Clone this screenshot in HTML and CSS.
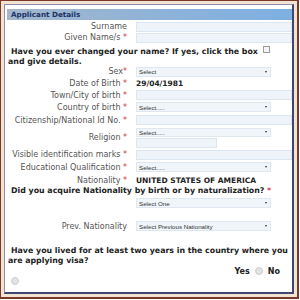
FILE: index.html
```html
<!DOCTYPE html>
<html>
<head>
<meta charset="utf-8">
<link rel="stylesheet" href="styles.css">
</head>
<body>
<div class="frame">
  <div class="panel">
    <div class="header">Applicant Details</div>

    <div class="row h11 mt1"><div class="lbl">Surname</div><div class="field"><div class="input wide"></div></div></div>
    <div class="row h11"><div class="lbl">Given Name/s <span class="req">*</span></div><div class="field"><div class="input wide"></div></div></div>

    <div class="question q1"><span>Have you ever changed your name? If yes, click the box</span><span class="check"></span><br>and give details.</div>

    <div class="row h11"><div class="lbl">Sex<span class="req">*</span></div><div class="field"><div class="select"><span>Select</span><span class="arrow"></span></div></div></div>
    <div class="row h12"><div class="lbl">Date of Birth <span class="req">*</span></div><div class="field"><span class="value">29/04/1981</span></div></div>
    <div class="row h12"><div class="lbl">Town/City of birth <span class="req">*</span></div><div class="field"><div class="input wide"></div></div></div>
    <div class="row h12"><div class="lbl">Country of birth <span class="req">*</span></div><div class="field"><div class="select"><span>Select.....</span><span class="arrow"></span></div></div></div>
    <div class="row h12 mt1"><div class="lbl">Citizenship/National Id No. <span class="req">*</span></div><div class="field"><div class="input wide"></div></div></div>
    <div class="row h21 mt1"><div class="lbl">Religion <span class="req">*</span></div><div class="field stack"><div class="select short"><span>Select.....</span><span class="arrow"></span></div><div class="input small"></div></div></div>
    <div class="row h11 mt1"><div class="lbl">Visible identification marks <span class="req">*</span></div><div class="field"><div class="input wide"></div></div></div>
    <div class="row h12 mt1"><div class="lbl">Educational Qualification <span class="req">*</span></div><div class="field"><div class="select"><span>Select.....</span><span class="arrow"></span></div></div></div>
    <div class="row h12 mt1"><div class="lbl">Nationality <span class="req">*</span></div><div class="field"><span class="value">UNITED STATES OF AMERICA</span></div></div>

    <div class="question q2">Did you acquire Nationality by birth or by naturalization? <span class="req">*</span></div>
    <div class="row h12 mt1"><div class="lbl"></div><div class="field"><div class="select"><span>Select One</span><span class="arrow"></span></div></div></div>

    <div class="row h12 mt11"><div class="lbl">Prev. Nationality</div><div class="field"><div class="select"><span>Select Previous Nationality</span><span class="arrow"></span></div></div></div>

    <div class="question q3">Have you lived for at least two years in the country where you<br>are applying visa?</div>
    <div class="yesno"><span>Yes</span><span class="radio"></span><span>No</span></div>
    <div class="radiorow"><span class="radio big"></span></div>
  </div>
</div>
</body>
</html>
```

FILE: styles.css
```css
html, body {
  margin: 0;
  padding: 0;
  background: #ffffff;
}
body {
  width: 300px;
  height: 300px;
  overflow: hidden;
  font-family: "DejaVu Sans", Verdana, sans-serif;
}
.frame {
  width: 299px;
  height: 299px;
  box-sizing: border-box;
  border-top: 1px solid #7d3a2c;
  border-left: 1px solid #7d3a2c;
  border-right: 2px solid #7d3a2c;
  border-bottom: 2px solid #7d3a2c;
  background: #f3e4d2;
  padding: 3px;
}
.panel {
  width: 100%;
  height: 100%;
  box-sizing: border-box;
  border-top: 1px solid #8c90ae;
  border-left: 1px solid #8c90ae;
  border-right: 2px solid #3e4872;
  border-bottom: 2px solid #3e4872;
  background: #ffffff;
  padding: 4px 0 0 2px;
  display: flex;
  flex-direction: column;
}
.header {
  height: 11px;
  line-height: 11px;
  background: linear-gradient(to right, #a3b6cb, #8cb2da 60%, #7eb0e3);
  color: #1b3466;
  font-weight: bold;
  font-size: 7.2px;
  padding-left: 4px;
}
.row {
  display: flex;
  align-items: center;
  font-size: 8px;
  color: #555555;
}
.h11 { height: 11px; }
.h12 { height: 12px; }
.h21 { height: 21px; }
.mt1 { margin-top: 1px; }
.mt11 { margin-top: 11px; }
.lbl {
  width: 120px;
  text-align: right;
  white-space: nowrap;
  flex: none;
}
.req {
  color: #d23a3a;
}
.field {
  margin-left: 9px;
  display: flex;
  align-items: center;
  flex: 1;
}
.stack {
  flex-direction: column;
  align-items: flex-start;
  gap: 1px;
}
.input {
  height: 10px;
  box-sizing: border-box;
  background: #eef4fa;
  border: 1px solid #dbe6f0;
}
.input.wide { width: 156px; }
.input.small { width: 81px; }
.select {
  width: 135px;
  height: 10px;
  box-sizing: border-box;
  background: #f0f5fa;
  border: 1px solid #dfe8f0;
  display: flex;
  align-items: center;
  justify-content: space-between;
  padding: 0 2px 0 2px;
  font-family: "Liberation Sans", Arial, sans-serif;
  font-size: 6.2px;
  color: #333333;
}
.select.short { height: 9px; }
.arrow {
  width: 0;
  height: 0;
  border-left: 1.2px solid transparent;
  border-right: 1.2px solid transparent;
  border-top: 2px solid #333333;
  margin-right: 1px;
}
.value {
  font-weight: bold;
  font-size: 7.5px;
  color: #222222;
}
.question {
  font-weight: bold;
  font-size: 7.85px;
  line-height: 10px;
  color: #222222;
  padding-left: 1px;
  text-indent: 3px;
  white-space: nowrap;
}
.q1 { margin-top: 3px; height: 20px; }
.q2 { height: 10px; }
.q3 { margin-top: 14px; height: 20px; }
.check {
  display: inline-block;
  width: 5px;
  height: 5px;
  border: 1px solid #9a9a9a;
  background: #f4f4f4;
  margin-left: 5px;
  text-indent: 0;
  vertical-align: 1px;
}
.yesno {
  height: 10px;
  display: flex;
  align-items: center;
  justify-content: flex-end;
  gap: 5px;
  padding-right: 12px;
  font-weight: bold;
  font-size: 8px;
  color: #222222;
}
.radio {
  display: inline-block;
  width: 6px;
  height: 6px;
  border-radius: 50%;
  background: #e2e2e2;
  border: 1px solid #cfcfcf;
}
.radiorow {
  margin-top: 1px;
  height: 8px;
  padding-left: 4px;
  display: flex;
  align-items: center;
}
.radio.big {
  width: 6px;
  height: 6px;
}
```
